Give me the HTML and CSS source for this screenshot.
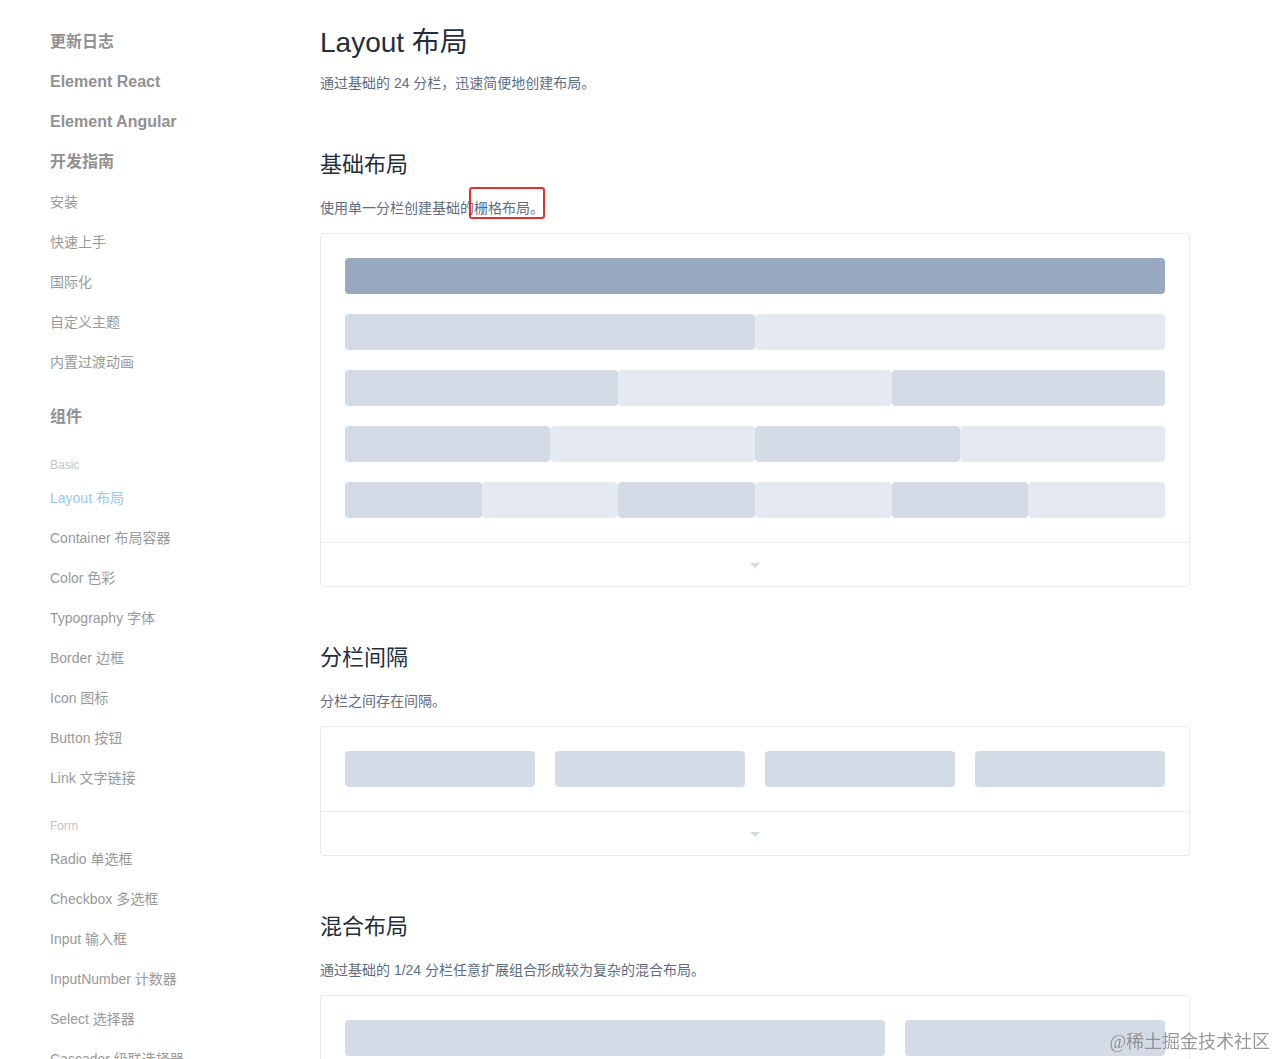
FILE: index.html
```html
<!DOCTYPE html>
<html lang="zh-CN">
<head>
<meta charset="utf-8">
<title>Layout 布局</title>
<link rel="stylesheet" href="styles.css">
</head>
<body>
<div class="page">
  <nav class="sidebar">
    <a class="nav-head">更新日志</a>
    <a class="nav-head">Element React</a>
    <a class="nav-head">Element Angular</a>
    <a class="nav-head">开发指南</a>
    <a class="nav-item">安装</a>
    <a class="nav-item">快速上手</a>
    <a class="nav-item">国际化</a>
    <a class="nav-item">自定义主题</a>
    <a class="nav-item">内置过渡动画</a>
    <a class="nav-head nav-head--group">组件</a>
    <div class="nav-label">Basic</div>
    <a class="nav-item nav-item--active">Layout 布局</a>
    <a class="nav-item">Container 布局容器</a>
    <a class="nav-item">Color 色彩</a>
    <a class="nav-item">Typography 字体</a>
    <a class="nav-item">Border 边框</a>
    <a class="nav-item">Icon 图标</a>
    <a class="nav-item">Button 按钮</a>
    <a class="nav-item">Link 文字链接</a>
    <div class="nav-label">Form</div>
    <a class="nav-item">Radio 单选框</a>
    <a class="nav-item">Checkbox 多选框</a>
    <a class="nav-item">Input 输入框</a>
    <a class="nav-item">InputNumber 计数器</a>
    <a class="nav-item">Select 选择器</a>
    <a class="nav-item">Cascader 级联选择器</a>
  </nav>

  <main class="content">
    <h2 class="title">Layout 布局</h2>
    <p class="lead">通过基础的 24 分栏，迅速简便地创建布局。</p>

    <h3 class="section-title">基础布局</h3>
    <p class="desc">使用单一分栏创建基础的<span class="mark">栅格布局。</span></p>
    <div class="demo">
      <div class="demo-body">
        <div class="row"><div class="col dark-3" style="flex:24"></div></div>
        <div class="row">
          <div class="col dark" style="flex:12"></div><div class="col light" style="flex:12"></div>
        </div>
        <div class="row">
          <div class="col dark" style="flex:8"></div><div class="col light" style="flex:8"></div><div class="col dark" style="flex:8"></div>
        </div>
        <div class="row">
          <div class="col dark" style="flex:6"></div><div class="col light" style="flex:6"></div><div class="col dark" style="flex:6"></div><div class="col light" style="flex:6"></div>
        </div>
        <div class="row">
          <div class="col dark" style="flex:4"></div><div class="col light" style="flex:4"></div><div class="col dark" style="flex:4"></div><div class="col light" style="flex:4"></div><div class="col dark" style="flex:4"></div><div class="col light" style="flex:4"></div>
        </div>
      </div>
      <div class="demo-control"><span class="caret"></span></div>
    </div>

    <h3 class="section-title">分栏间隔</h3>
    <p class="desc">分栏之间存在间隔。</p>
    <div class="demo">
      <div class="demo-body">
        <div class="row row--gutter">
          <div class="col dark" style="flex:6"></div><div class="col dark" style="flex:6"></div><div class="col dark" style="flex:6"></div><div class="col dark" style="flex:6"></div>
        </div>
      </div>
      <div class="demo-control"><span class="caret"></span></div>
    </div>

    <h3 class="section-title">混合布局</h3>
    <p class="desc">通过基础的 1/24 分栏任意扩展组合形成较为复杂的混合布局。</p>
    <div class="demo">
      <div class="demo-body">
        <div class="row row--gutter">
          <div class="col dark" style="width:540px"></div><div class="col dark" style="width:260px"></div>
        </div>
        <div class="row row--gutter">
          <div class="col dark" style="width:260px"></div><div class="col dark" style="width:540px"></div>
        </div>
      </div>
    </div>
  </main>
</div>
<div class="watermark">@稀土掘金技术社区</div>
</body>
</html>
```

FILE: styles.css
```css
* { box-sizing: border-box; }

html, body {
  margin: 0;
  padding: 0;
  background: #fff;
}

body {
  font-family: "Liberation Sans", Arial, "Noto Sans CJK SC", sans-serif;
  overflow: hidden;
  height: 1059px;
}

.page {
  display: flex;
  align-items: flex-start;
}

/* Sidebar */
.sidebar {
  width: 320px;
  flex: none;
  padding: 22px 0 0 50px;
  display: flex;
  flex-direction: column;
}

.nav-head {
  display: block;
  font-size: 16px;
  font-weight: bold;
  line-height: 40px;
  color: #919191;
}

.nav-head--group {
  margin-top: 15px;
}

.nav-item {
  display: block;
  font-size: 14px;
  line-height: 40px;
  color: #999;
}

.nav-item--active {
  color: #98c8f4;
}

.nav-label {
  font-size: 12px;
  line-height: 26px;
  margin-top: 15px;
  color: #c4c4c4;
}

/* Content */
.content {
  width: 870px;
  flex: none;
  padding-top: 23px;
}

.title {
  margin: 0;
  font-size: 28px;
  font-weight: 400;
  line-height: 40px;
  color: #1f2f3d;
}

.lead {
  margin: 9px 0 0;
  font-size: 14px;
  line-height: 22px;
  color: #5e6d82;
}

.section-title {
  margin: 55px 0 0;
  font-size: 22px;
  font-weight: 400;
  line-height: 32px;
  color: #1f2f3d;
}

.desc {
  margin: 16px 0 14px;
  font-size: 14px;
  line-height: 22px;
  color: #5e6d82;
}

.mark {
  position: relative;
  display: inline-block;
  line-height: 22px;
}

.mark::after {
  content: "";
  position: absolute;
  left: -5px;
  right: -1px;
  top: -10px;
  bottom: 0;
  border: 2px solid #e3302b;
  border-radius: 3px;
}

.demo {
  border: 1px solid #ebebeb;
  border-radius: 3px;
}

.demo + .section-title {
  margin-top: 55px;
}

.demo-body {
  padding: 24px;
  display: flex;
  flex-direction: column;
  gap: 20px;
}

.row {
  display: flex;
  height: 36px;
}

.row--gutter {
  gap: 20px;
}

.col {
  border-radius: 4px;
  min-width: 0;
}

.dark-3 { background: #99a9bf; }
.dark { background: #d3dce6; }
.light { background: #e5e9f2; }

.demo-control {
  height: 44px;
  border-top: 1px solid #eaeefb;
  display: flex;
  align-items: center;
  justify-content: center;
}

.caret {
  width: 0;
  height: 0;
  border-left: 5px solid transparent;
  border-right: 5px solid transparent;
  border-top: 5px solid #d3dce6;
  margin-top: 2px;
}

.watermark {
  position: fixed;
  right: 7px;
  bottom: 6px;
  font-family: "Liberation Serif", "Noto Sans CJK SC", serif;
  font-size: 18px;
  color: rgba(120, 120, 120, 0.75);
  line-height: 22px;
}
```
